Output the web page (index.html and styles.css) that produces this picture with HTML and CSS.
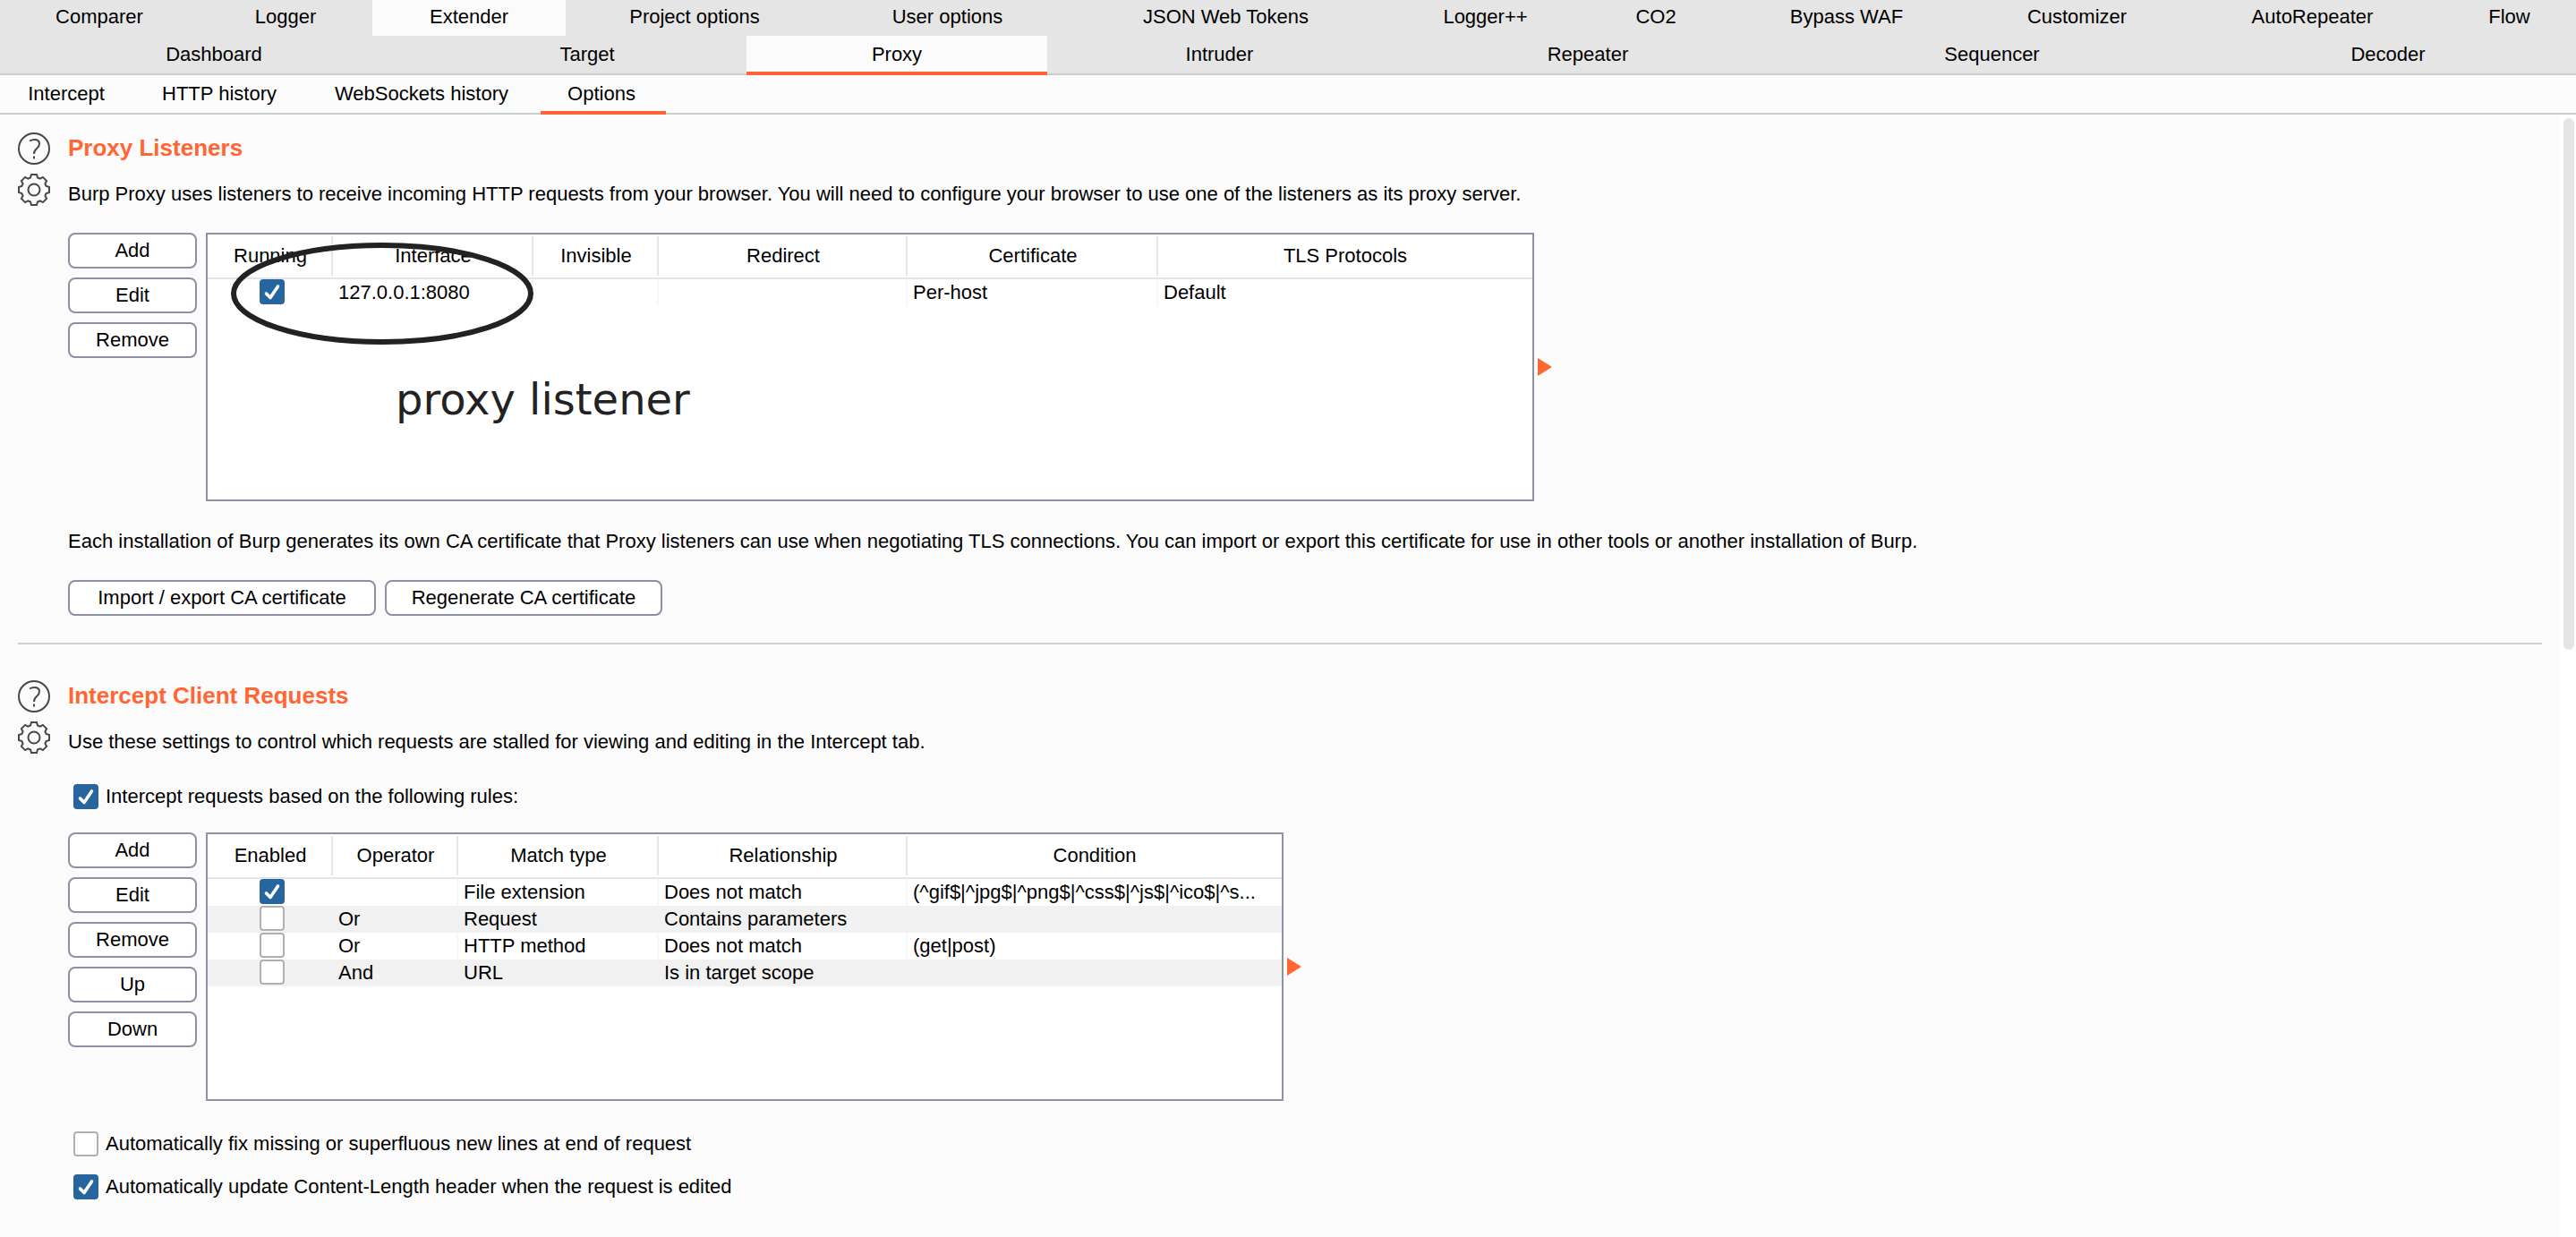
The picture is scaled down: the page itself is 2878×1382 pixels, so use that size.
FILE: index.html
```html
<!DOCTYPE html>
<html lang="en">
<head>
<meta charset="utf-8">
<title>Proxy options</title>
<link rel="stylesheet" href="styles.css">
</head>
<body>
<svg class="defs" width="0" height="0" aria-hidden="true">
  <symbol id="help" viewBox="0 0 36 36">
    <circle cx="18" cy="18" r="17"/>
    <path d="M13 9.5Q15.5 8 18.5 8Q24 8 24 12.5Q24 15.5 21 18Q18 20.5 18 24M18 26.5V29.5"/>
  </symbol>
  <symbol id="gear" viewBox="-18 -18 36 36">
    <path d="M-4-13.6L-3-17H3L4-13.6L6.8-12.4L9.9-14.1L14.1-9.9L12.4-6.8L13.6-4L17-3V3L13.6 4L12.4 6.8L14.1 9.9L9.9 14.1L6.8 12.4L4 13.6L3 17H-3L-4 13.6L-6.8 12.4L-9.9 14.1L-14.1 9.9L-12.4 6.8L-13.6 4L-17 3V-3L-13.6-4L-12.4-6.8L-14.1-9.9L-9.9-14.1L-6.8-12.4Z"/>
    <circle r="6.5"/>
  </symbol>
</svg>

<nav class="tabs">
  <div class="tab-row upper">
    <button>Comparer</button>
    <button>Logger</button>
    <button class="lit">Extender</button>
    <button>Project options</button>
    <button>User options</button>
    <button>JSON Web Tokens</button>
    <button>Logger++</button>
    <button>CO2</button>
    <button>Bypass WAF</button>
    <button>Customizer</button>
    <button>AutoRepeater</button>
    <button>Flow</button>
  </div>
  <div class="tab-row lower">
    <button>Dashboard</button>
    <button>Target</button>
    <button class="current">Proxy</button>
    <button>Intruder</button>
    <button>Repeater</button>
    <button>Sequencer</button>
    <button>Decoder</button>
  </div>
  <div class="subtabs">
    <button>Intercept</button>
    <button>HTTP history</button>
    <button>WebSockets history</button>
    <button class="current">Options</button>
  </div>
</nav>

<div class="view">
  <main class="panel">
    <section class="group">
      <div class="tools">
        <button class="icon" aria-label="Help"><svg><use href="#help"/></svg></button>
        <button class="icon" aria-label="Settings"><svg><use href="#gear"/></svg></button>
      </div>
      <div class="content">
        <h2>Proxy Listeners</h2>
        <p class="intro">Burp Proxy uses listeners to receive incoming HTTP requests from your browser. You will need to configure your browser to use one of the listeners as its proxy server.</p>
        <div class="editor first">
          <div class="actions">
            <button class="btn">Add</button>
            <button class="btn">Edit</button>
            <button class="btn">Remove</button>
          </div>
          <div class="frame listeners">
            <table>
              <colgroup><col class="w140"><col class="w224"><col class="w140"><col class="w278"><col class="w280"><col></colgroup>
              <thead><tr><th>Running</th><th>Interface</th><th>Invisible</th><th>Redirect</th><th>Certificate</th><th>TLS Protocols</th></tr></thead>
              <tbody>
                <tr><td><input type="checkbox" aria-label="Running" checked></td><td>127.0.0.1:8080</td><td></td><td></td><td>Per-host</td><td>Default</td></tr>
              </tbody>
            </table>
            <svg class="ring" viewBox="0 0 338 114" aria-hidden="true"><ellipse cx="169" cy="57" rx="166" ry="54"/></svg>
            <span class="note">proxy listener</span>
          </div>
          <button class="expander" aria-label="Expand"></button>
        </div>
        <p class="about">Each installation of Burp generates its own CA certificate that Proxy listeners can use when negotiating TLS connections. You can import or export this certificate for use in other tools or another installation of Burp.</p>
        <div class="buttons">
          <button class="btn">Import / export CA certificate</button>
          <button class="btn">Regenerate CA certificate</button>
        </div>
      </div>
    </section>

    <section class="group">
      <div class="tools">
        <button class="icon" aria-label="Help"><svg><use href="#help"/></svg></button>
        <button class="icon" aria-label="Settings"><svg><use href="#gear"/></svg></button>
      </div>
      <div class="content">
        <h2>Intercept Client Requests</h2>
        <p class="intro">Use these settings to control which requests are stalled for viewing and editing in the Intercept tab.</p>
        <label class="check"><input type="checkbox" checked>Intercept requests based on the following rules:</label>
        <div class="editor">
          <div class="actions">
            <button class="btn">Add</button>
            <button class="btn">Edit</button>
            <button class="btn">Remove</button>
            <button class="btn">Up</button>
            <button class="btn">Down</button>
          </div>
          <div class="frame rules">
            <table>
              <colgroup><col class="w140"><col class="w140"><col class="w224"><col class="w278"><col></colgroup>
              <thead><tr><th>Enabled</th><th>Operator</th><th>Match type</th><th>Relationship</th><th>Condition</th></tr></thead>
              <tbody>
                <tr><td><input type="checkbox" aria-label="Enabled" checked></td><td></td><td>File extension</td><td>Does not match</td><td>(^gif$|^jpg$|^png$|^css$|^js$|^ico$|^s...</td></tr>
                <tr><td><input type="checkbox" aria-label="Enabled"></td><td>Or</td><td>Request</td><td>Contains parameters</td><td></td></tr>
                <tr><td><input type="checkbox" aria-label="Enabled"></td><td>Or</td><td>HTTP method</td><td>Does not match</td><td>(get|post)</td></tr>
                <tr><td><input type="checkbox" aria-label="Enabled"></td><td>And</td><td>URL</td><td>Is in target scope</td><td></td></tr>
              </tbody>
            </table>
          </div>
          <button class="expander" aria-label="Expand"></button>
        </div>
        <label class="check">
          <input type="checkbox">Automatically fix missing or superfluous new lines at end of request</label>
        <label class="check close">
          <input type="checkbox" checked>Automatically update Content-Length header when the request is edited</label>
      </div>
    </section>
  </main>
  <div class="scroll"><div class="thumb"></div></div>
</div>
</body>
</html>
```

FILE: styles.css
```css
* { box-sizing: border-box; }

body {
  margin: 0;
  min-height: 100vh;
  display: flex;
  flex-direction: column;
  background: #fbfbfb;
  color: #000;
  font: 22px/26px "Liberation Sans", Arial, sans-serif;
}

button {
  margin: 0;
  padding: 0;
  border: 0;
  background: none;
  color: inherit;
  font: inherit;
  white-space: nowrap;
}

.defs { position: absolute; }

/* Tab bars */
.tab-row {
  display: grid;
  background: #e5e5e5;
}
.upper {
  height: 40px;
  grid-template-columns: 222fr 194fr 216fr 288fr 277fr 345fr 235fr 146fr 280fr 235fr 291fr 149fr;
}
.upper button { min-width: 0; padding-bottom: 2px; }
.lower {
  height: 44px;
  grid-template-columns: 478fr 356fr 336fr 385fr 438fr 465fr 420fr;
}
.lower button,
.subtabs button { border-bottom: 2px solid #c8d0ce; }
.lit { background: #fbfbfb; }
.lower .current,
.subtabs .current {
  background: #fbfbfb;
  border-bottom: 4px solid #ff6633;
  padding-top: 2px;
}
.subtabs {
  display: grid;
  grid-template-columns: 152px 190px 262px 140px 1fr;
  height: 44px;
}
.subtabs button { padding-right: 4px; }
.subtabs::after {
  content: "";
  border-bottom: 2px solid #c8d0ce;
}

/* Scrolling view */
.view { flex: 1; display: flex; }
.panel { flex: 1; padding: 0 20px; }
.scroll {
  width: 18px;
  padding: 4px 2px 0 4px;
  background: #fff;
  display: grid;
  grid-template-rows: 594fr 656fr;
}
.thumb { border-radius: 6px; background: #e5e5e5; }

/* Option groups */
.group {
  display: flex;
  gap: 20px;
  padding: 20px 0 30px;
}
.group + .group {
  border-top: 2px solid #d0d0d0;
  padding-top: 40px;
}
.tools {
  display: flex;
  flex-direction: column;
  gap: 10px;
}
.icon, .icon svg { display: block; width: 36px; height: 36px; }
.icon svg { fill: none; stroke: #484848; stroke-width: 2; }
.content { flex: 1; }
h2 {
  margin: 0;
  color: #ff6633;
  font-size: 26px;
  line-height: 34px;
}
p { margin: 0; }
.intro { margin-top: 22px; }
.about { margin-top: 32px; }
.buttons {
  display: grid;
  grid-template-columns: 344px 310px;
  gap: 10px;
  margin-top: 30px;
}
.btn {
  height: 40px;
  border: 2px solid #9090a4;
  border-radius: 8px;
  background: #fff;
}

.editor {
  display: flex;
  align-items: flex-start;
  margin-top: 26px;
}
.first { margin-top: 30px; }
.actions {
  display: flex;
  flex-direction: column;
  gap: 10px;
  width: 144px;
  margin-right: 10px;
}
.frame {
  position: relative;
  height: 300px;
  border: 2px solid #9090a4;
  background: #fff;
}
.listeners { width: 1484px; }
.rules { width: 1204px; }
.expander {
  align-self: center;
  width: 16px;
  height: 20px;
  margin-left: 4px;
  background: #ff6633;
  clip-path: polygon(0 0, 100% 50%, 0 100%);
}

/* Tables */
table {
  width: 100%;
  table-layout: fixed;
  border-collapse: separate;
  border-spacing: 0;
}
.w140 { width: 140px; }
.w224 { width: 224px; }
.w278 { width: 278px; }
.w280 { width: 280px; }
th {
  height: 50px;
  padding: 0;
  border-bottom: 2px solid #e5e5e5;
  font-weight: normal;
  background: linear-gradient(#e5e5e5, #e5e5e5) right 2px / 2px 44px no-repeat;
}
th:last-child { background: none; }
td {
  height: 30px;
  padding: 0 6px;
  border-right: 2px solid #f7f7f7;
  white-space: nowrap;
}
td:first-child, td:last-child, tr:nth-child(even) td { border-right-color: transparent; }
td:first-child { padding: 0; text-align: center; }
tbody tr:nth-child(even) { background: #f1f1f1; }
td input { display: block; margin: 0 0 2px 58px; }

/* Tick boxes */
.check {
  display: flex;
  gap: 8px;
  width: fit-content;
  margin: 34px 0 0 6px;
  line-height: 28px;
}
.close { margin-top: 20px; }
input[type="checkbox"] {
  appearance: none;
  width: 28px;
  height: 28px;
  border: 2px solid #b0b0b0;
  border-radius: 4px;
  background: #fff;
}
.check input { margin: 0; }
input[type="checkbox"]:checked {
  border: 0;
  background: #26659d url("data:image/svg+xml,%3Csvg xmlns='http://www.w3.org/2000/svg' viewBox='0 0 28 28'%3E%3Cpath d='M7.5 16L12 20.5L20.5 8' fill='none' stroke='white' stroke-width='3.6' stroke-linecap='round' stroke-linejoin='round'/%3E%3C/svg%3E");
}

/* Annotation laid over the listener table */
.ring {
  position: absolute;
  left: 26px;
  top: 9px;
  width: 338px;
  height: 114px;
  fill: none;
  stroke: #222;
  stroke-width: 6;
}
.note {
  position: absolute;
  left: 210px;
  top: 156px;
  color: #222;
  font: 48px/56px "DejaVu Sans", Verdana, sans-serif;
  white-space: nowrap;
}
```
